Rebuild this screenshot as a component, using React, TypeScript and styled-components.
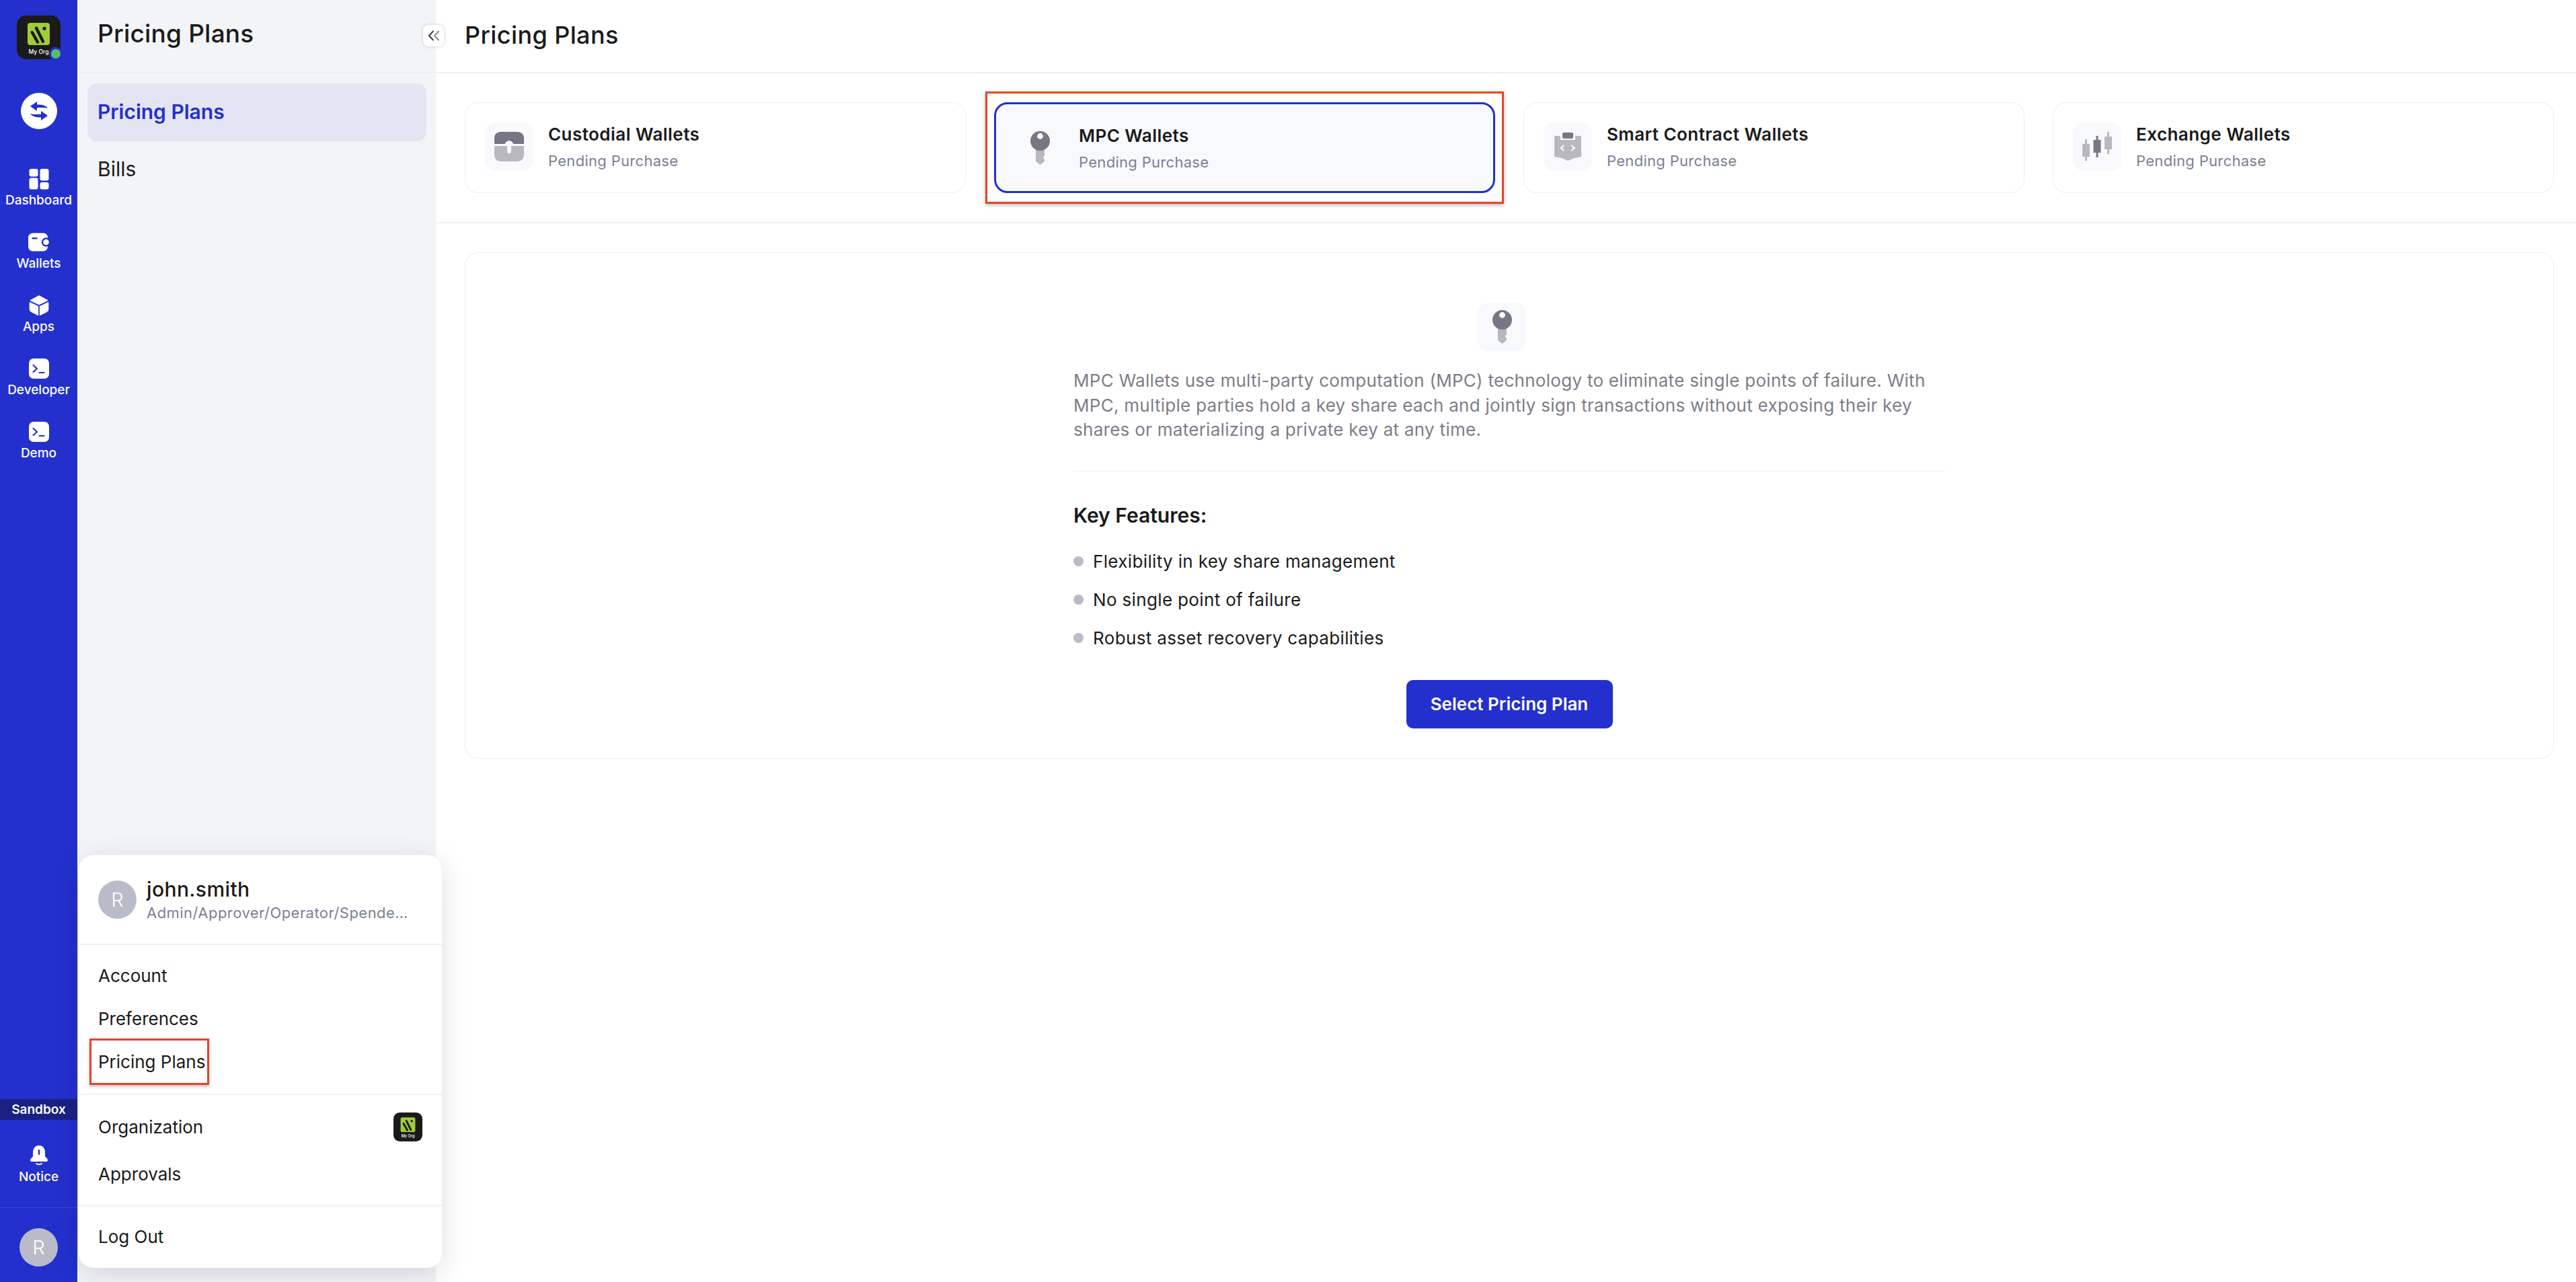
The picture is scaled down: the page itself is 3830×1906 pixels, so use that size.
import styled, { createGlobalStyle } from "styled-components";

const FONT = `Inter, "Noto Sans", "Liberation Sans", sans-serif`;
const BLUE = "#2330ce";
const ICON_DARK = "#787685";
const ICON_LIGHT = "#b9b8c0";

const navItems = ["Dashboard", "Wallets", "Apps", "Developer", "Demo"];

const wallets = [
  { name: "Custodial Wallets", kind: "custodial" },
  { name: "MPC Wallets", kind: "key", active: true },
  { name: "Smart Contract Wallets", kind: "smart" },
  { name: "Exchange Wallets", kind: "exchange" },
];

const features = [
  "Flexibility in key share management",
  "No single point of failure",
  "Robust asset recovery capabilities",
];

function OrgLogo(props: { size: number }) {
  return (
    <svg width={props.size} height={props.size} viewBox="0 0 65 65">
      <rect width="65" height="65" rx="14" fill="#1a1a1a" />
      <rect x="16" y="11" width="33" height="33" rx="4" fill="#a1cc3a" />
      <path d="M22.7 25 31 39.7M29 18.7 39 38.7" stroke="#1a1a1a" strokeWidth="4.4" strokeLinecap="round" />
      <circle cx="41" cy="19.3" r="2.6" fill="#1a1a1a" />
      <text x="32.5" y="56.5" textAnchor="middle" fontSize="8.5" fontWeight="500" fill="#fff" fontFamily={FONT}>
        My Org
      </text>
    </svg>
  );
}

function NavIcon(props: { name: string }) {
  if (props.name === "Dashboard") {
    return (
      <svg width="34" height="34" viewBox="0 0 34 34" fill="#fff">
        <rect x="2.5" y="2" width="13" height="11.5" rx="3" />
        <rect x="2.5" y="15.5" width="13" height="17" rx="3" />
        <rect x="18.5" y="2" width="13" height="17.5" rx="3" />
        <rect x="18.5" y="22" width="13" height="10.5" rx="3" />
      </svg>
    );
  }
  if (props.name === "Wallets") {
    return (
      <svg width="34" height="34" viewBox="0 0 34 34">
        <rect x="1" y="3.5" width="29" height="27" rx="6.5" fill="#fff" />
        <rect x="22" y="11.5" width="11" height="11" rx="5.5" fill="#fff" stroke={BLUE} strokeWidth="2.4" />
        <rect x="6.5" y="10" width="8" height="2.4" rx="1.2" fill={BLUE} />
      </svg>
    );
  }
  if (props.name === "Apps") {
    return (
      <svg width="34" height="34" viewBox="0 0 34 34" fill="#fff" stroke="#fff" strokeWidth="1.5" strokeLinejoin="round">
        <path d="M17 3 29.5 9.6 17 15.6 4.5 9.6Z" />
        <path d="M3.4 13 15.4 18.6V31.4L5.6 26.4Q3.4 25.2 3.4 23Z" />
        <path d="M30.6 13 18.6 18.6V31.4L28.4 26.4Q30.6 25.2 30.6 23Z" />
      </svg>
    );
  }
  return (
    <svg width="34" height="34" viewBox="0 0 34 34" fill="none">
      <rect x="2" y="2" width="30" height="30" rx="7" fill="#fff" />
      <path d="M8.5 12 14 17 8.5 22" stroke={BLUE} strokeWidth="2.2" strokeLinecap="round" strokeLinejoin="round" />
      <path d="M17.5 23H24.5" stroke={BLUE} strokeWidth="2.2" strokeLinecap="round" />
    </svg>
  );
}

function WalletIcon(props: { kind: string }) {
  if (props.kind === "custodial") {
    return (
      <svg width="72" height="72" viewBox="0 0 72 72">
        <path d="M14 32V24Q14 14 24 14H48Q58 14 58 24V32H42A6.2 6.2 0 0 0 30 32Z" fill={ICON_DARK} />
        <path d="M14 35H33V43A3 3 0 0 0 39 43V35H58V47Q58 58 47 58H25Q14 58 14 47Z" fill={ICON_LIGHT} />
      </svg>
    );
  }
  if (props.kind === "smart") {
    return (
      <svg width="72" height="72" viewBox="0 0 72 72">
        <path d="M16 21Q16 20 17 20H25V26H47V20H55Q56 20 56 21V51L46 53 36 57 27 53 16 51Z" fill={ICON_LIGHT} />
        <rect x="28" y="15" width="16" height="9" rx="2" fill={ICON_DARK} />
        <path d="M30.5 34 25.7 38 30.5 42M41 34 46 38 41 42" fill="none" stroke="#fff" strokeWidth="2" />
      </svg>
    );
  }
  if (props.kind === "exchange") {
    return (
      <svg width="72" height="72" viewBox="0 0 72 72">
        <g fill={ICON_LIGHT}>
          <rect x="18" y="25" width="3" height="32" />
          <rect x="14" y="32" width="11" height="19" />
          <rect x="51" y="14" width="3" height="33" />
          <rect x="47" y="21" width="11" height="19" />
        </g>
        <g fill={ICON_DARK}>
          <rect x="34.5" y="20" width="3" height="32" />
          <rect x="30.5" y="26" width="11" height="19" />
        </g>
      </svg>
    );
  }
  return (
    <svg width="72" height="72" viewBox="0 0 72 72">
      <path d="M30 38H43V47L41 50 43 53V56L36.5 61 30 56Z" fill={ICON_LIGHT} />
      <circle cx="36.5" cy="25.5" r="14.5" fill={ICON_DARK} />
      <circle cx="36.5" cy="18.5" r="4.4" fill="#fff" />
    </svg>
  );
}

export default function App() {
  return (
    <Shell>
      <GlobalStyle />
      <Rail>
        <RailLogo>
          <OrgLogo size={65} />
          <StatusDot />
        </RailLogo>
        <SwapButton>
          <svg width="54" height="54" viewBox="0 0 54 54" fill={BLUE}>
            <path d="M14 20 24 13V17.5C31 17.5 37 18.5 40 23 35 21.5 30 22 24 22V27Z" />
            <path d="M40 34 30 41V36.5C23 36.5 17 35.5 14 31 19 32.5 24 32 30 32V27Z" />
          </svg>
        </SwapButton>
        <NavList>
          {navItems.map((name) => (
            <NavItem key={name}>
              <NavIcon name={name} />
              <NavLabel>{name}</NavLabel>
            </NavItem>
          ))}
        </NavList>
        <SandboxBar>Sandbox</SandboxBar>
        <NoticeItem>
          <svg width="34" height="34" viewBox="0 0 34 34">
            <path
              d="M17 2C11 2 8 7 8 12V17C8 20 4 21 4 24 4 26 6 26 8 26H26C28 26 30 26 30 24 30 21 26 20 26 17V12C26 7 23 2 17 2Z"
              fill="#fff"
            />
            <rect x="15.8" y="8" width="2.4" height="8" rx="1.2" fill={BLUE} />
            <path d="M13 29Q17 31.5 21 29" fill="none" stroke="#fff" strokeWidth="2" strokeLinecap="round" />
          </svg>
          <NavLabel>Notice</NavLabel>
        </NoticeItem>
        <RailUser>
          <Avatar>R</Avatar>
        </RailUser>
      </Rail>

      <SidePanel>
        <PanelHeader>
          <PanelTitle>Pricing Plans</PanelTitle>
          <CollapseButton>
            <svg width="18" height="18" viewBox="0 0 18 18" fill="none" strokeWidth="2" strokeLinecap="round" strokeLinejoin="round">
              <path d="M8 2.5 2 9 8 15.5" stroke="#3d3d4a" />
              <path d="M16 2.5 10 9 16 15.5" stroke="#8a8a96" />
            </svg>
          </CollapseButton>
        </PanelHeader>
        <PanelMenu>
          <PanelItem $active>Pricing Plans</PanelItem>
          <PanelItem>Bills</PanelItem>
        </PanelMenu>
      </SidePanel>

      <Main>
        <MainHeader>Pricing Plans</MainHeader>
        <CardBand>
          {wallets.map((w) => (
            <WalletCard key={w.name} $active={w.active}>
              {w.active && <RedMark $card />}
              <IconBox>
                <WalletIcon kind={w.kind} />
              </IconBox>
              <div>
                <CardTitle>{w.name}</CardTitle>
                <CardSub>Pending Purchase</CardSub>
              </div>
            </WalletCard>
          ))}
        </CardBand>
        <DetailCard>
          <DetailColumn>
            <DetailIcon>
              <WalletIcon kind="key" />
            </DetailIcon>
            <Description>
              MPC Wallets use multi-party computation (MPC) technology to eliminate single points of failure. With
              <br />
              MPC, multiple parties hold a key share each and jointly sign transactions without exposing their key
              <br />
              shares or materializing a private key at any time.
            </Description>
            <Divider />
            <FeaturesTitle>Key Features:</FeaturesTitle>
            <FeatureList>
              {features.map((f) => (
                <FeatureRow key={f}>{f}</FeatureRow>
              ))}
            </FeatureList>
            <SelectButton>Select Pricing Plan</SelectButton>
          </DetailColumn>
        </DetailCard>
      </Main>

      <UserMenu>
        <UserHeader>
          <Avatar>R</Avatar>
          <UserText>
            <UserName>john.smith</UserName>
            <UserRole>Admin/Approver/Operator/Spender/Viewer</UserRole>
          </UserText>
        </UserHeader>
        <MenuSection $top={13} $bottom={16}>
          <MenuRow $height={64}>Account</MenuRow>
          <MenuRow $height={64}>Preferences</MenuRow>
          <MenuRow $height={64}>
            Pricing Plans
            <RedMark />
          </MenuRow>
        </MenuSection>
        <MenuSection $top={12} $bottom={11}>
          <MenuRow $height={70}>
            Organization
            <OrgLogo size={43} />
          </MenuRow>
          <MenuRow $height={70}>Approvals</MenuRow>
        </MenuSection>
        <LastSection>
          <MenuRow $height={90}>Log Out</MenuRow>
        </LastSection>
      </UserMenu>
    </Shell>
  );
}

const GlobalStyle = createGlobalStyle`
  html, body {
    margin: 0;
    padding: 0;
    background: #fff;
    font-family: ${FONT};
    color: #1a1a1a;
  }
  * {
    box-sizing: border-box;
  }
`;

const Shell = styled.div`
  position: relative;
  display: flex;
  height: 100vh;
  overflow: hidden;
`;

const Rail = styled.aside`
  display: flex;
  flex-direction: column;
  align-items: center;
  flex: 0 0 115px;
  padding-top: 23px;
  background: ${BLUE};
  color: #fff;
`;

const RailLogo = styled.div`
  position: relative;
  width: 65px;
  height: 65px;
  svg {
    display: block;
  }
`;

const StatusDot = styled.span`
  position: absolute;
  right: -3px;
  bottom: -2px;
  width: 20px;
  height: 20px;
  border-radius: 50%;
  background: #56bb6e;
  border: 3px solid ${BLUE};
`;

const SwapButton = styled.div`
  width: 54px;
  height: 54px;
  margin-top: 50px;
  border-radius: 50%;
  background: #fff;
  svg {
    display: block;
  }
`;

const NavList = styled.nav`
  display: flex;
  flex-direction: column;
  margin-top: 57px;
  width: 100%;
`;

const NavItem = styled.div`
  display: flex;
  flex-direction: column;
  align-items: center;
  gap: 3px;
  height: 94px;
`;

const NavLabel = styled.span`
  font-size: 19px;
  line-height: 24px;
  font-weight: 500;
  color: #fff;
`;

const SandboxBar = styled.div`
  width: 100%;
  height: 31px;
  margin-top: auto;
  background: #1a2183;
  font-size: 19px;
  line-height: 31px;
  font-weight: 600;
  text-align: center;
`;

const NoticeItem = styled.div`
  display: flex;
  flex-direction: column;
  align-items: center;
  gap: 3px;
  width: 100%;
  padding: 36px 0 33px;
`;

const RailUser = styled.div`
  display: flex;
  justify-content: center;
  width: 100%;
  padding: 30px 0 23px;
  border-top: 1px solid rgba(255, 255, 255, 0.14);
`;

const Avatar = styled.div`
  display: flex;
  align-items: center;
  justify-content: center;
  flex: 0 0 57px;
  width: 57px;
  height: 57px;
  border-radius: 50%;
  background: #b9bcc8;
  color: #fff;
  font-size: 29px;
  font-weight: 300;
`;

const SidePanel = styled.section`
  flex: 0 0 533px;
  background: #f3f4f8;
`;

const PanelHeader = styled.header`
  position: relative;
  display: flex;
  align-items: center;
  height: 108px;
  padding: 0 30px 8px;
  border-bottom: 1px solid #ebecf1;
`;

const PanelTitle = styled.h1`
  margin: 0;
  font-size: 37px;
  letter-spacing: 0.2px;
  font-weight: 500;
`;

const CollapseButton = styled.div`
  position: absolute;
  top: 37px;
  right: -12px;
  display: flex;
  align-items: center;
  justify-content: center;
  width: 31px;
  height: 32px;
  border-radius: 8px;
  background: #fff;
  box-shadow: 0 0 5px rgba(0, 0, 0, 0.18);
`;

const PanelMenu = styled.div`
  padding: 16px 14px 0 15px;
`;

const PanelItem = styled.div<{ $active?: boolean }>`
  display: flex;
  align-items: center;
  height: ${(p) => (p.$active ? "86px" : "84px")};
  padding: 0 15px 2px;
  border-radius: 14px;
  background: ${(p) => (p.$active ? "#e3e5f2" : "transparent")};
  color: ${(p) => (p.$active ? BLUE : "#1a1a1a")};
  font-size: 30px;
  font-weight: ${(p) => (p.$active ? 600 : 400)};
`;

const Main = styled.main`
  flex: 1;
  min-width: 0;
`;

const MainHeader = styled.h2`
  display: flex;
  align-items: center;
  height: 109px;
  margin: 0;
  padding: 0 43px 4px;
  border-bottom: 2px solid #f0f0f6;
  font-size: 36px;
  letter-spacing: 0.4px;
  font-weight: 500;
`;

const CardBand = styled.div`
  display: grid;
  grid-template-columns: repeat(4, 1fr);
  gap: 42px;
  padding: 43px 33px 43px 43px;
  border-bottom: 2px solid #f0f0f6;
`;

const WalletCard = styled.div<{ $active?: boolean }>`
  position: relative;
  display: flex;
  align-items: flex-start;
  gap: 22px;
  height: 135px;
  padding: 29px;
  border: ${(p) => (p.$active ? `3px solid ${BLUE}` : "1px solid #eeeef4")};
  border-radius: 20px;
  background: ${(p) => (p.$active ? "#f8f9fd" : "#fff")};
`;

const RedMark = styled.span<{ $card?: boolean }>`
  position: absolute;
  border: 3px solid #e8432a;
  box-shadow: 0 2px 5px rgba(0, 0, 0, 0.28);
  pointer-events: none;
  ${(p) =>
    p.$card
      ? "inset: -19px -16px;"
      : "left: 16px; top: -2px; width: 178px; height: 69px;"}
`;

const IconBox = styled.div`
  flex: 0 0 72px;
  width: 72px;
  height: 72px;
  border-radius: 16px;
  background: #f8f9fd;
  svg {
    display: block;
  }
`;

const CardTitle = styled.div`
  margin-top: 1px;
  font-size: 26px;
  line-height: 34px;
  letter-spacing: 0.45px;
  font-weight: 600;
`;

const CardSub = styled.div`
  margin-top: 7px;
  font-size: 22px;
  line-height: 30px;
  letter-spacing: 0.3px;
  color: #7b8095;
`;

const DetailCard = styled.div`
  margin: 43px 33px 0 43px;
  padding: 74px 0 44px;
  border: 1px solid #eeeef4;
  border-radius: 20px;
`;

const DetailColumn = styled.div`
  display: flex;
  flex-direction: column;
  width: 1296px;
  margin: 0 auto;
`;

const DetailIcon = styled(IconBox)`
  align-self: center;
  margin-right: 22px;
`;

const Description = styled.p`
  margin: 26px 0 0;
  font-size: 26px;
  line-height: 36.5px;
  letter-spacing: 0.28px;
  color: #7d7d88;
  white-space: nowrap;
`;

const Divider = styled.div`
  height: 1px;
  margin-top: 42px;
  background: #ececf1;
`;

const FeaturesTitle = styled.h3`
  margin: 43px 0 0;
  font-size: 30px;
  line-height: 44px;
  font-weight: 600;
`;

const FeatureList = styled.ul`
  display: flex;
  flex-direction: column;
  gap: 27px;
  margin: 32px 0 0;
  padding: 0;
  list-style: none;
`;

const FeatureRow = styled.li`
  display: flex;
  align-items: center;
  gap: 14px;
  font-size: 26px;
  line-height: 30px;
  letter-spacing: 0.35px;
  &::before {
    content: "";
    width: 15px;
    height: 15px;
    border-radius: 50%;
    background: #b9bcc8;
  }
`;

const SelectButton = styled.button`
  align-self: center;
  width: 307px;
  height: 72px;
  margin-top: 47px;
  border: none;
  border-radius: 10px;
  background: ${BLUE};
  color: #fff;
  font-family: ${FONT};
  font-size: 26px;
  font-weight: 600;
`;

const UserMenu = styled.div`
  position: absolute;
  left: 117px;
  bottom: 21px;
  width: 540px;
  height: 614px;
  border-radius: 22px;
  background: #fff;
  box-shadow: 0 10px 44px rgba(0, 0, 0, 0.13);
`;

const UserHeader = styled.div`
  display: flex;
  align-items: center;
  gap: 15px;
  height: 134px;
  padding: 0 29px;
  border-bottom: 2px solid #f0f0f5;
`;

const UserText = styled.div`
  min-width: 0;
`;

const UserName = styled.div`
  font-size: 30px;
  line-height: 38px;
  letter-spacing: 0.4px;
  font-weight: 500;
`;

const UserRole = styled.div`
  width: 392px;
  margin-top: 1px;
  overflow: hidden;
  font-size: 22px;
  line-height: 30px;
  letter-spacing: 0.45px;
  color: #7b8095;
  white-space: nowrap;
  text-overflow: ellipsis;
`;

const MenuSection = styled.div<{ $top: number; $bottom: number }>`
  padding: ${(p) => p.$top}px 0 ${(p) => p.$bottom}px;
  border-bottom: 2px solid #f0f0f5;
`;

const LastSection = styled.div``;

const MenuRow = styled.div<{ $height: number }>`
  position: relative;
  display: flex;
  align-items: center;
  justify-content: space-between;
  height: ${(p) => p.$height}px;
  padding: 0 29px;
  font-size: 26px;
`;
